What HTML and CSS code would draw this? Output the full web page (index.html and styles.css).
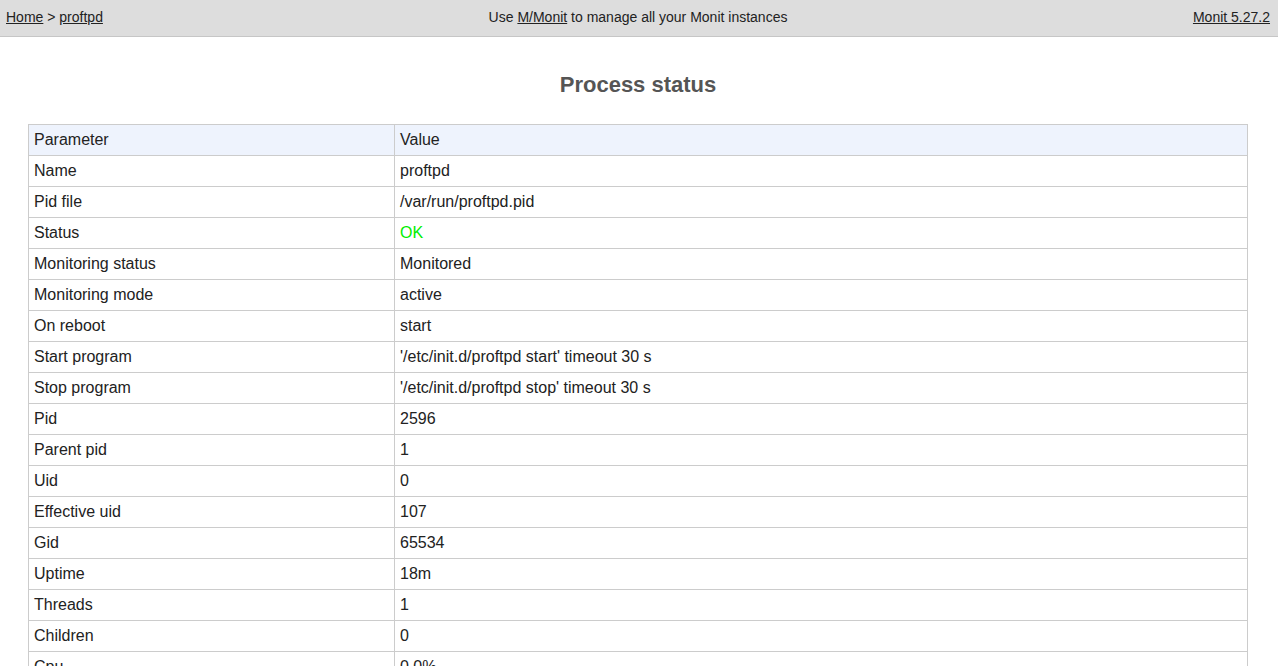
FILE: index.html
```html
<!DOCTYPE html>
<html>
<head>
<meta charset="utf-8">
<title>Monit: proftpd</title>
<link rel="stylesheet" href="styles.css">
</head>
<body>
<div class="header">
  <div class="crumbs"><a href="#">Home</a> &gt; <a href="#">proftpd</a></div>
  <div class="promo">Use <a href="#">M/Monit</a> to manage all your Monit instances</div>
  <div class="version"><a href="#">Monit 5.27.2</a></div>
</div>
<div class="content">
  <h1 class="title">Process status</h1>
  <table class="status">
    <tr class="head"><th>Parameter</th><th>Value</th></tr>
    <tr><td>Name</td><td>proftpd</td></tr>
    <tr><td>Pid file</td><td>/var/run/proftpd.pid</td></tr>
    <tr><td>Status</td><td class="ok">OK</td></tr>
    <tr><td>Monitoring status</td><td>Monitored</td></tr>
    <tr><td>Monitoring mode</td><td>active</td></tr>
    <tr><td>On reboot</td><td>start</td></tr>
    <tr><td>Start program</td><td>'/etc/init.d/proftpd start' timeout 30 s</td></tr>
    <tr><td>Stop program</td><td>'/etc/init.d/proftpd stop' timeout 30 s</td></tr>
    <tr><td>Pid</td><td>2596</td></tr>
    <tr><td>Parent pid</td><td>1</td></tr>
    <tr><td>Uid</td><td>0</td></tr>
    <tr><td>Effective uid</td><td>107</td></tr>
    <tr><td>Gid</td><td>65534</td></tr>
    <tr><td>Uptime</td><td>18m</td></tr>
    <tr><td>Threads</td><td>1</td></tr>
    <tr><td>Children</td><td>0</td></tr>
    <tr><td>Cpu</td><td>0.0%</td></tr>
    <tr><td>Cpu total</td><td>0.0%</td></tr>
    <tr><td>Memory</td><td>0.1% [2.9 MB]</td></tr>
    <tr><td>Memory total</td><td>0.1% [2.9 MB]</td></tr>
  </table>
</div>
</body>
</html>
```
FILE: styles.css
```css
html, body {
  margin: 0;
  padding: 0;
  background: #fff;
  font-family: "Liberation Sans", Arial, sans-serif;
  color: #222;
}
a { color: #222; text-decoration: underline; }
.header {
  display: flex;
  align-items: center;
  justify-content: space-between;
  height: 37px;
  box-sizing: border-box;
  background: #ddd;
  border-bottom: 1px solid #c6c6c6;
  padding: 0 8px 2px 6px;
  font-size: 14px;
}
.crumbs, .version { flex: 1; }
.version { text-align: right; }
.promo { flex: 0 0 auto; }
.content {
  padding: 0 30px 0 28px;
}
.title {
  margin: 0;
  padding: 35px 0 26px;
  text-align: center;
  font-size: 22px;
  line-height: 26px;
  font-weight: bold;
  color: #555;
}
.status {
  width: 100%;
  border-collapse: collapse;
  font-size: 16px;
}
.status th, .status td {
  border: 1px solid #ccc;
  height: 31px;
  padding: 0 5px;
  text-align: left;
  font-weight: normal;
  color: #222;
  box-sizing: border-box;
}
.status th:first-child, .status td:first-child { width: 366px; }
.status .head th { background: #eef3fd; }
.status td.ok { color: #0e0; }
```
